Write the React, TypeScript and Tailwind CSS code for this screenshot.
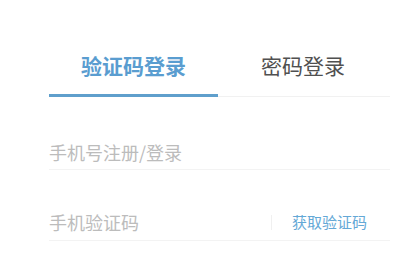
import React, { useState } from "react";

export default function App() {
  const [tab, setTab] = useState(0);
  const font = { fontFamily: '"Noto Sans CJK SC", "Noto Sans", sans-serif' };
  return (
    <div className="w-[400px] h-[280px] bg-white overflow-hidden" style={font}>
      <div className="ml-[49px] w-[341px] pt-[38px]">
        <div className="flex border-b border-[#f1f1f1]">
          <button
            onClick={() => setTab(0)}
            className={`w-[169px] h-[59px] -mb-px pb-px flex items-center justify-center text-[21px] font-bold border-b-[3px] ${
              tab === 0 ? "border-[#5f9fcc] text-[#5a9dd0]" : "border-transparent text-[#505050]"
            }`}
          >
            验证码登录
          </button>
          <button
            onClick={() => setTab(1)}
            className={`w-[170px] h-[59px] -mb-px pb-px flex items-center justify-center text-[21px] border-b-[3px] ${
              tab === 1 ? "border-[#5f9fcc] text-[#5a9dd0] font-bold" : "border-transparent text-[#505050]"
            }`}
          >
            密码登录
          </button>
        </div>
        <div className="mt-[38px] h-[35px] flex items-center border-b border-[#f3f3f3]">
          <input
            className="flex-1 outline-none bg-transparent text-[18px] text-[#333] placeholder:text-[#bcbcbc]"
            placeholder="手机号注册/登录"
          />
        </div>
        <div className="mt-[34px] h-[37px] flex items-center border-b border-[#f3f3f3]">
          <input
            className="w-[200px] outline-none bg-transparent text-[18px] text-[#333] placeholder:text-[#bcbcbc]"
            placeholder="手机验证码"
          />
          <div className="ml-auto w-px h-[15px] bg-[#f0f0f0]" />
          <button className="ml-[20px] mr-[23px] text-[15px] text-[#64a8d6]">获取验证码</button>
        </div>
      </div>
    </div>
  );
}
